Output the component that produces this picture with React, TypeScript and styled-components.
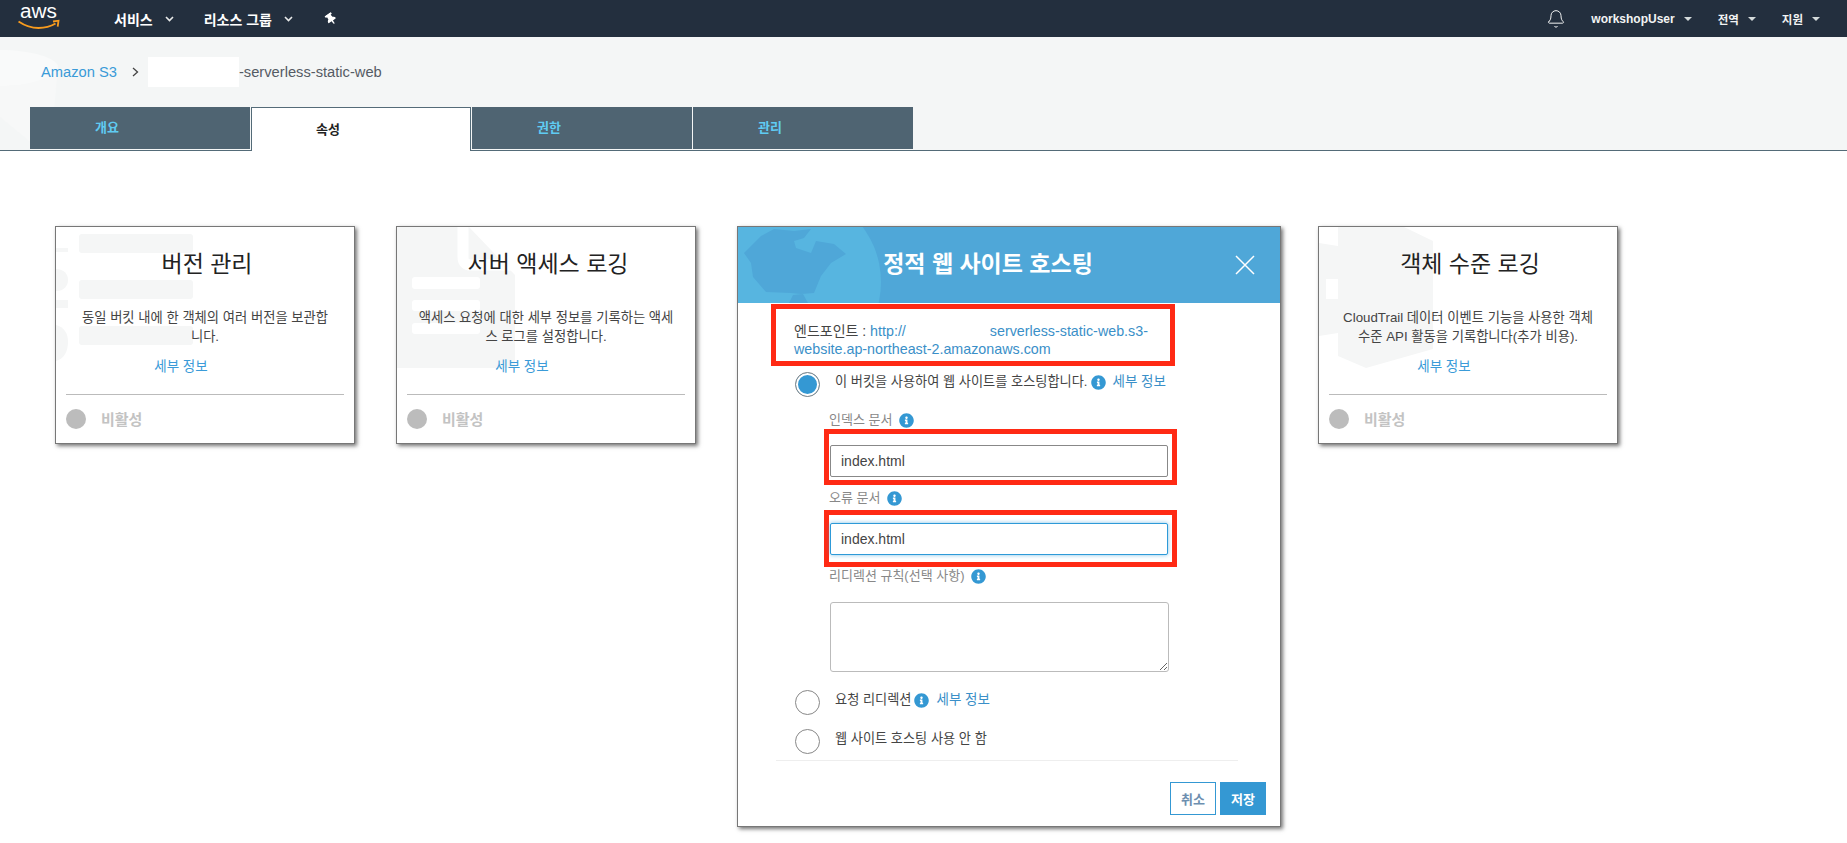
import React from "react";
import styled, { createGlobalStyle } from "styled-components";
import { Bell } from "lucide-react";
import { FaInfoCircle, FaThumbtack } from "react-icons/fa";

const Global = createGlobalStyle`
  html, body { margin: 0; padding: 0; background: #fff; }
  body {
    font-family: "Liberation Sans", "Noto Sans CJK KR", Arial, sans-serif;
    color: #444;
    overflow: hidden;
  }
  * { box-sizing: border-box; }
`;

const Page = styled.div`
  width: 1847px;
  height: 843px;
  overflow: hidden;
  background: #fff;
`;

/* ---------- top navigation ---------- */
const Nav = styled.header`
  height: 37px;
  background: #232f3e;
  display: flex;
  align-items: center;
  padding: 0 27px 0 18px;
  color: #fff;
`;
const Logo = styled.svg`
  width: 42px;
  height: 37px;
  margin-right: 54px;
  flex: none;
`;
const NavLeft = styled.div`
  display: flex;
  align-items: center;
  gap: 30px;
`;
const NavRight = styled.div`
  margin-left: auto;
  display: flex;
  align-items: center;
  gap: 26px;
`;
const NavItem = styled.div`
  display: flex;
  align-items: center;
  gap: 12px;
  font-size: 14px;
  font-weight: 700;
  white-space: nowrap;
`;
const SmallNavItem = styled.div`
  display: flex;
  align-items: center;
  gap: 9px;
  font-size: 11.5px;
  font-weight: 700;
  color: #f2f3f3;
  white-space: nowrap;
`;
const UserName = styled.span`
  font-size: 12px;
`;
const Caret = styled.span`
  width: 0;
  height: 0;
  border-left: 4px solid transparent;
  border-right: 4px solid transparent;
  border-top: 4px solid #d5dbdb;
`;
const Pin = styled(FaThumbtack)`
  transform: rotate(-35deg);
  margin-left: 2px;
`;
const BellIcon = styled(Bell)`
  margin-right: -1px;
`;

const Chevron = () => (
  <svg width="9" height="6" viewBox="0 0 9 6" fill="none" stroke="#e8eaea" strokeWidth="1.6">
    <path d="M1 1l3.500 3.500L8 1" />
  </svg>
);

/* ---------- breadcrumb + tabs ---------- */
const SubHeader = styled.section`
  position: relative;
  height: 114px;
  background: #f4f6f6;
  border-bottom: 1px solid #546b78;
  display: flex;
  flex-direction: column;
`;
const SubWatermark = styled.svg`
  position: absolute;
  left: 0;
  top: 0;
  width: 70px;
  height: 113px;
`;
const Crumbs = styled.nav`
  position: relative;
  height: 70px;
  padding-left: 41px;
  display: flex;
  align-items: center;
  font-size: 14.7px;
  line-height: 30px;
  color: #545b64;
`;
const CrumbLink = styled.a`
  color: #3a9bd8;
`;
const CrumbSep = styled.svg`
  width: 7px;
  height: 10px;
  margin: 0 9px 0 15px;
`;
const Redacted = styled.span`
  display: inline-block;
  width: 91px;
  height: 30px;
  background: #fff;
`;
const Tabs = styled.div`
  position: relative;
  display: flex;
  gap: 1px;
  padding-left: 30px;
`;
const Tab = styled.div<{ $active?: boolean }>`
  width: 220px;
  height: ${(p) => (p.$active ? "44px" : "42px")};
  margin-bottom: ${(p) => (p.$active ? "-1px" : "0")};
  padding: 0 66px 3px 0;
  display: flex;
  align-items: center;
  justify-content: center;
  font-size: 13px;
  font-weight: 700;
  background: ${(p) => (p.$active ? "#fff" : "#4f6472")};
  color: ${(p) => (p.$active ? "#222" : "#5fcbf2")};
  border: ${(p) => (p.$active ? "1px solid #546b78" : "none")};
  border-bottom: none;
`;

/* ---------- cards ---------- */
const CardRow = styled.main`
  display: flex;
  align-items: flex-start;
  gap: 41px;
  padding: 75px 0 0 55px;
`;
const Card = styled.article`
  position: relative;
  width: 300px;
  height: 218px;
  flex: none;
  background: #fff;
  border: 1px solid #777;
  box-shadow: 2px 2px 4px rgba(0, 0, 0, 0.55);
  padding: 22px 10px 0;
  display: flex;
  flex-direction: column;
`;
const Watermark = styled.svg`
  position: absolute;
  left: 0;
  top: 0;
  width: 298px;
  height: 216px;
`;
const CardTitle = styled.h2`
  position: relative;
  margin: 0;
  padding-left: 4px;
  font-size: 23px;
  line-height: 30px;
  font-weight: 400;
  color: #222;
  text-align: center;
`;
const CardText = styled.p`
  position: relative;
  margin: 29px 0 0;
  font-size: 13.3px;
  line-height: 19px;
  color: #444;
  text-align: center;
`;
const DetailLink = styled.a`
  position: relative;
  margin-top: 11px;
  padding-right: 48px;
  font-size: 13.5px;
  line-height: 20px;
  color: #3a9bd8;
  text-align: center;
`;
const Divider = styled.hr`
  position: relative;
  width: 100%;
  margin: 17px 0 0;
  border: none;
  border-top: 1px solid #bbb;
`;
const Status = styled.div`
  position: relative;
  margin-top: 13px;
  display: flex;
  align-items: center;
  gap: 15px;
  font-size: 15px;
  font-weight: 700;
  color: #c3c3c3;
`;
const StatusDot = styled.span`
  width: 20px;
  height: 20px;
  border-radius: 50%;
  background: #bcbcbc;
`;

/* ---------- modal card ---------- */
const Modal = styled.section`
  width: 544px;
  height: 601px;
  flex: none;
  margin-right: -4px;
  background: #fff;
  border: 1px solid #777;
  box-shadow: 2px 2px 4px rgba(0, 0, 0, 0.55);
`;
const ModalHead = styled.div`
  position: relative;
  height: 76px;
  background: #4fa7d8;
  overflow: hidden;
  display: flex;
  align-items: center;
  justify-content: center;
  padding-right: 42px;
`;
const Globe = styled.svg`
  position: absolute;
  left: 0;
  top: 0;
  width: 160px;
  height: 76px;
`;
const ModalTitle = styled.h2`
  position: relative;
  margin: 0 0 6px 0;
  font-size: 23px;
  font-weight: 700;
  color: #fff;
`;
const Close = styled.svg`
  position: absolute;
  right: 25px;
  top: 28px;
  width: 20px;
  height: 20px;
`;
const ModalBody = styled.div`
  padding-top: 1px;
  display: flex;
  flex-direction: column;
  align-items: flex-start;
`;
const EndpointBox = styled.div`
  width: 404px;
  height: 62px;
  margin-left: 33px;
  padding: 13px 0 0 18px;
  border: 5px solid #ff2a14;
  font-size: 14px;
  line-height: 18px;
  color: #444;
`;
const EndpointLink = styled.a`
  color: #3a8fc8;
  font-size: 14.3px;
`;
const EndpointGap = styled.span`
  display: inline-block;
  width: 84px;
`;
const RadioRow = styled.div<{ $mt: number }>`
  margin: ${(p) => p.$mt}px 0 0 57px;
  display: flex;
  align-items: flex-start;
  gap: 15px;
  font-size: 13.2px;
  line-height: 20px;
  color: #444;
`;
const Radio = styled.span<{ $on?: boolean }>`
  width: 25px;
  height: 25px;
  flex: none;
  border-radius: 50%;
  border: 1px solid #888;
  background: ${(p) => (p.$on ? "#3498d3" : "#fff")};
  box-shadow: ${(p) => (p.$on ? "inset 0 0 0 2px #fff" : "none")};
`;
const RadioLabel = styled.span`
  display: flex;
  align-items: center;
  gap: 3px;
  white-space: nowrap;
`;
const InlineLink = styled.a`
  margin-left: 4px;
  font-size: 13.5px;
  color: #3a8fc8;
`;
const Info = styled(FaInfoCircle)`
  color: #3498d3;
  flex: none;
`;
const FieldLabel = styled.label<{ $mt: number }>`
  margin: ${(p) => p.$mt}px 0 0 91px;
  display: flex;
  align-items: center;
  gap: 7px;
  font-size: 13px;
  line-height: 18px;
  color: #888;
`;
const FieldBox = styled.div<{ $h: number; $pt: number; $mt: number }>`
  width: 353px;
  height: ${(p) => p.$h}px;
  margin: ${(p) => p.$mt}px 0 0 86px;
  padding: ${(p) => p.$pt}px 0 0 1px;
  border: 5px solid #ff2a14;
`;
const TextInput = styled.input<{ $focus?: boolean }>`
  display: block;
  width: 338px;
  height: 32px;
  padding: 0 10px;
  font: 14px "Liberation Sans", Arial, sans-serif;
  color: #444;
  background: #fff;
  outline: none;
  border-radius: 2px;
  border: 1px solid ${(p) => (p.$focus ? "#2e9ad8" : "#888")};
  box-shadow: ${(p) => (p.$focus ? "0 0 4px rgba(46,154,216,.6)" : "none")};
`;
const TextArea = styled.textarea`
  display: block;
  width: 339px;
  height: 70px;
  margin: 17px 0 0 92px;
  border: 1px solid #bbb;
  border-radius: 3px;
  outline: none;
  resize: vertical;
  background: #fff;
`;
const FootLine = styled.hr`
  width: 462px;
  margin: 6px 0 0 38px;
  border: none;
  border-top: 1px solid #eee;
`;
const Actions = styled.div`
  align-self: stretch;
  margin-top: 21px;
  padding-right: 14px;
  display: flex;
  justify-content: flex-end;
  gap: 4px;
`;
const Button = styled.button<{ $primary?: boolean }>`
  width: 46px;
  height: 33px;
  padding: 0;
  font: 700 13px "Liberation Sans", "Noto Sans CJK KR", sans-serif;
  border: 1px solid #3498d3;
  background: ${(p) => (p.$primary ? "#3498d3" : "#fff")};
  color: ${(p) => (p.$primary ? "#fff" : "#6d8fb0")};
`;

const details = [
  {
    title: "버전 관리",
    text: (
      <>
        동일 버킷 내에 한 객체의 여러 버전을 보관합
        <br />
        니다.
      </>
    ),
    art: (
      <g fill="#f5f6f6">
        <rect x="23" y="7" width="114" height="19" rx="3" />
        <rect x="23" y="53" width="114" height="19" rx="3" />
        <rect x="23" y="99" width="114" height="19" rx="3" />
        <rect x="0" y="21" width="12" height="4" />
        <path d="M0 42c8 0 12 5 12 11s-4 11-12 11z" />
        <rect x="0" y="73" width="12" height="8" />
        <path d="M0 98c8 2 12 8 12 17s-4 17-12 19z" />
      </g>
    ),
  },
  {
    title: "서버 액세스 로깅",
    text: (
      <>
        액세스 요청에 대한 세부 정보를 기록하는 액세
        <br />
        스 로그를 설정합니다.
      </>
    ),
    art: (
      <g>
        <path fill="#f5f6f6" d="M0 0H72L118 48V141H0z" />
        <path fill="none" stroke="#fff" strokeWidth="11" d="M66 0V30q0 8 8 8H124" />
        <path fill="#fff" d="M84 0H118V28z" />
        <g fill="#fff">
          <rect x="15" y="50" width="68" height="12" rx="3" />
          <rect x="15" y="73" width="68" height="11" rx="3" />
          <rect x="15" y="96" width="68" height="11" rx="3" />
        </g>
      </g>
    ),
  },
];

const App = () => (
  <Page>
    <Global />
    <Nav>
      <Logo viewBox="0 0 42 37" aria-label="aws">
        <text x="2" y="18.200" fontFamily="Liberation Sans, sans-serif" fontSize="20" fill="#fff" textLength="37" lengthAdjust="spacingAndGlyphs">
          aws
        </text>
        <path d="M0.500 21.500c6 4 13 6.500 20 6.500 6 0 12-1.500 17-4.500" fill="none" stroke="#f79b1e" strokeWidth="2" />
        <path d="M35 21.500l5.500-.8-.8 6" fill="none" stroke="#f79b1e" strokeWidth="1.800" />
      </Logo>
      <NavLeft>
        <NavItem>
          서비스
          <Chevron />
        </NavItem>
        <NavItem>
          리소스 그룹
          <Chevron />
        </NavItem>
        <Pin size={12} color="#fff" />
      </NavLeft>
      <NavRight>
        <BellIcon size={20} strokeWidth={1.2} color="#f2f3f3" />
        <SmallNavItem>
          <UserName>workshopUser</UserName>
          <Caret />
        </SmallNavItem>
        <SmallNavItem>
          전역
          <Caret />
        </SmallNavItem>
        <SmallNavItem>
          지원
          <Caret />
        </SmallNavItem>
      </NavRight>
    </Nav>

    <SubHeader>
      <SubWatermark viewBox="0 0 70 113">
        <path d="M0 13c30 0 60 8 58 18-2 12-30 18-58 18z" fill="#f9fafa" />
        <path d="M58 31L50 113H40L0 80V49c25 0 50-6 58-18z" fill="#f7f8f8" />
      </SubWatermark>
      <Crumbs>
        <CrumbLink>Amazon S3</CrumbLink>
        <CrumbSep viewBox="0 0 7 10" fill="none" stroke="#444" strokeWidth="1.300">
          <path d="M1 1l4.500 4L1 9" />
        </CrumbSep>
        <Redacted />
        -serverless-static-web
      </Crumbs>
      <Tabs>
        <Tab>개요</Tab>
        <Tab $active>속성</Tab>
        <Tab>권한</Tab>
        <Tab>관리</Tab>
      </Tabs>
    </SubHeader>

    <CardRow>
      {details.map((d) => (
        <Card key={d.title}>
          <Watermark viewBox="0 0 298 216">{d.art}</Watermark>
          <CardTitle>{d.title}</CardTitle>
          <CardText>{d.text}</CardText>
          <DetailLink>세부 정보</DetailLink>
          <Divider />
          <Status>
            <StatusDot />
            비활성
          </Status>
        </Card>
      ))}

      <Modal>
        <ModalHead>
          <Globe viewBox="0 0 160 76">
            <circle cx="51" cy="55" r="92" fill="#57b5e0" />
            <path
              fill="#4fa7d8"
              d="M6 26L23 9 36 2l20 2 17-2-7 9-10 3 2 7 15 5 5-12 18 3 12 10-15 9-10 13-7 17-13 1-10-1-25-1-13-15-2-14z"
            />
            <path fill="#4fa7d8" d="M51 76l4-8 10-1 5 9z" />
          </Globe>
          <ModalTitle>정적 웹 사이트 호스팅</ModalTitle>
          <Close viewBox="0 0 20 20" stroke="#fff" strokeWidth="1.500">
            <path d="M1 1l18 18M19 1L1 19" />
          </Close>
        </ModalHead>
        <ModalBody>
          <EndpointBox>
            엔드포인트 :{" "}
            <EndpointLink>
              http://
              <EndpointGap />
              serverless-static-web.s3-
              <br />
              website.ap-northeast-2.amazonaws.com
            </EndpointLink>
          </EndpointBox>
          <RadioRow $mt={6}>
            <Radio $on />
            <RadioLabel>
              이 버킷을 사용하여 웹 사이트를 호스팅합니다.
              <Info size={15} />
              <InlineLink>세부 정보</InlineLink>
            </RadioLabel>
          </RadioRow>
          <FieldLabel $mt={14}>
            인덱스 문서 <Info size={15} />
          </FieldLabel>
          <FieldBox $h={56} $pt={11} $mt={0}>
            <TextInput defaultValue="index.html" />
          </FieldBox>
          <FieldLabel $mt={4}>
            오류 문서 <Info size={15} />
          </FieldLabel>
          <FieldBox $h={57} $pt={8} $mt={3}>
            <TextInput $focus defaultValue="index.html" />
          </FieldBox>
          <FieldLabel $mt={0}>
            리디렉션 규칙(선택 사항) <Info size={15} />
          </FieldLabel>
          <TextArea />
          <RadioRow $mt={18}>
            <Radio />
            <RadioLabel>
              요청 리디렉션
              <Info size={15} />
              <InlineLink>세부 정보</InlineLink>
            </RadioLabel>
          </RadioRow>
          <RadioRow $mt={14}>
            <Radio />
            <RadioLabel>웹 사이트 호스팅 사용 안 함</RadioLabel>
          </RadioRow>
          <FootLine />
          <Actions>
            <Button>취소</Button>
            <Button $primary>저장</Button>
          </Actions>
        </ModalBody>
      </Modal>

      <Card>
        <Watermark viewBox="0 0 298 216">
          <path fill="#f5f6f6" d="M19 0H85L114 14V122L47 141 19 129z" />
          <path fill="#f5f6f6" d="M0 16L19 19V106L0 109z" />
          <rect x="7" y="52" width="12" height="20" fill="#fff" />
        </Watermark>
        <CardTitle>객체 수준 로깅</CardTitle>
        <CardText>
          CloudTrail 데이터 이벤트 기능을 사용한 객체
          <br />
          수준 API 활동을 기록합니다(추가 비용).
        </CardText>
        <DetailLink>세부 정보</DetailLink>
        <Divider />
        <Status>
          <StatusDot />
          비활성
        </Status>
      </Card>
    </CardRow>
  </Page>
);

export default App;
